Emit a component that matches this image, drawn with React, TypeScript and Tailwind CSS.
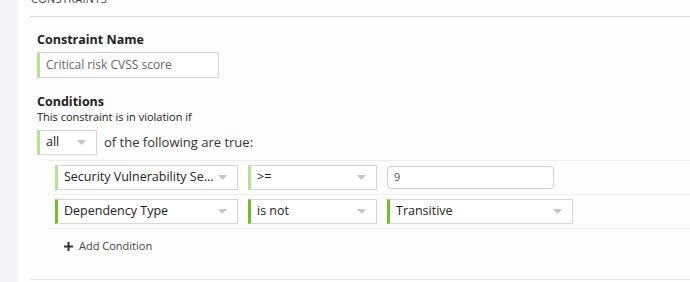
import React from 'react';

function Caret() {
  return (
    <svg width="9" height="5" viewBox="0 0 9 5" className="shrink-0">
      <path d="M0 0h9L4.5 5z" fill="#c4c4c4" />
    </svg>
  );
}

function Select({ value, width, strong, faint }: { value: string; width: string; strong?: boolean; faint?: boolean }) {
  const edge = strong ? 'border-l-[3px] border-l-[#72bf2c]' : faint ? 'border-l-[3px] border-l-[#b9df93]' : '';
  return (
    <div className={`${width} h-[25px] flex items-center justify-between bg-white border border-[#d6d6d6] ${edge} pl-[6px] pr-[10px]`}>
      <span className="whitespace-nowrap text-[12.5px] text-[#222]">{value}</span>
      <Caret />
    </div>
  );
}

export default function App() {
  return (
    <div className="flex w-[690px] h-[282px] overflow-hidden" style={{ fontFamily: '"Open Sans", "Noto Sans", sans-serif' }}>
      <div className="w-[18px] shrink-0 bg-[#f3f4f8]" />
      <div className="flex-1 bg-[#fdfdfd] pl-[12px] flex flex-col">
        <div className="h-[17px] border-b border-[#d9d9d9] overflow-hidden">
          <div className="-mt-[9px] text-[11px] tracking-wide text-[#444] pl-[1px]">CONSTRAINTS</div>
        </div>

        <div className="pl-[7px] pt-[14px]">
          <div className="text-[12.5px] font-bold text-[#222] leading-[18px]">Constraint Name</div>
          <div className="mt-[3px] w-[182px] h-[26px] flex items-center border border-[#d6d6d6] border-l-[3px] border-l-[#b9df93] bg-white pl-[6px] text-[12px] text-[#666]">
            Critical risk CVSS score
          </div>

          <div className="mt-[15px] text-[12.5px] font-bold text-[#222] leading-[17px]">Conditions</div>
          <div className="text-[11px] text-[#222] leading-[14px]">This constraint is in violation if</div>
          <div className="mt-[6px] flex items-center gap-[7px]">
            <Select value="all" width="w-[60px]" faint />
            <span className="text-[13px] text-[#333]">of the following are true:</span>
          </div>
        </div>

        <div className="mt-[5px] ml-[18px] flex flex-col">
          <div className="border-t border-[#eeeeee] py-[4px] pl-[7px] flex items-center gap-[10px]">
            <Select value="Security Vulnerability Se..." width="w-[183px]" faint />
            <Select value=">=" width="w-[129px]" faint />
            <div className="w-[167px] h-[23px] flex items-center rounded-[4px] border border-[#cfcfcf] bg-white pl-[6px] text-[11px] text-[#555]">9</div>
          </div>
          <div className="border-t border-[#eeeeee] py-[4px] pl-[7px] flex items-center gap-[10px]">
            <Select value="Dependency Type" width="w-[183px]" strong />
            <Select value="is not" width="w-[129px]" strong />
            <Select value="Transitive" width="w-[186px]" strong />
          </div>
          <div className="border-t border-[#eeeeee] pl-[16px] pt-[9px] flex items-center gap-[6px] text-[11px] text-[#444]">
            <svg width="9" height="9" viewBox="0 0 9 9">
              <path d="M3.5 0h2v3.5H9v2H5.5V9h-2V5.5H0v-2h3.5z" fill="#333" />
            </svg>
            <span>Add Condition</span>
          </div>
        </div>

        <div className="mt-auto mb-[2px] border-b border-[#e6e6e6]" />
      </div>
    </div>
  );
}
